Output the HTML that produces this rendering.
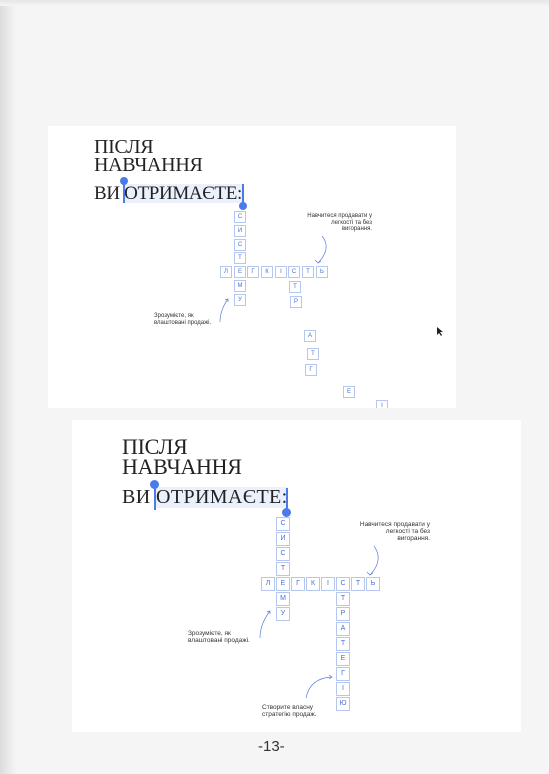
<!DOCTYPE html>
<html><head><meta charset="utf-8"><style>
*{margin:0;padding:0;box-sizing:border-box}
body{width:549px;height:774px;background:#f5f5f5;position:relative;overflow:hidden;font-family:"Liberation Sans",sans-serif}
.shl{position:absolute;left:0;top:0;width:16px;height:774px;background:linear-gradient(to right,#dcdcdc,#f5f5f5)}
.sht{position:absolute;left:0;top:0;width:549px;height:6px;background:linear-gradient(to bottom,#e6e6e6,#f5f5f5)}
.card{position:absolute;background:#fff;overflow:hidden}
.t{position:absolute;font-family:"Liberation Serif",serif;color:#222;white-space:nowrap;letter-spacing:-0.3px;line-height:1}
.hl{position:absolute;background:#eaf0fc}
.bar{position:absolute;width:2px;background:#4a7bea}
.dot{position:absolute;border-radius:50%;background:#4a7bea}
.b{position:absolute;border:1px solid #b5c6f0;color:#4a6fd6;text-align:center}
.c1 .b{width:12px;height:12px;font-size:6px;line-height:10px}
.c2 .b{width:14px;height:14px;font-size:7px;line-height:12px}
.n{position:absolute;color:#333;white-space:nowrap}
</style></head><body>
<div class="shl"></div><div class="sht"></div>

<div class="card c1" style="left:48px;top:126px;width:408px;height:282px">
<div class="t" style="left:46px;top:11px;font-size:20px">ПІСЛЯ</div>
<div class="t" style="left:46px;top:29px;font-size:20px">НАВЧАННЯ</div>
<div class="hl" style="left:76px;top:58px;width:119px;height:19px"></div>
<div class="t" style="left:46px;top:58px;font-size:19px;letter-spacing:-0.35px">ВИ <span>ОТРИМАЄТЕ:</span></div>
<div class="bar" style="left:75px;top:55px;height:22px"></div>
<div class="dot" style="left:72px;top:51px;width:8px;height:8px"></div>
<div class="bar" style="left:194px;top:58px;height:22px"></div>
<div class="dot" style="left:191px;top:76px;width:8px;height:8px"></div>
<div class="b" style="left:186px;top:85px">С</div>
<div class="b" style="left:186px;top:99px">И</div>
<div class="b" style="left:186px;top:113px">С</div>
<div class="b" style="left:186px;top:126px">Т</div>
<div class="b" style="left:172px;top:140px">Л</div>
<div class="b" style="left:186px;top:140px">Е</div>
<div class="b" style="left:199px;top:140px">Г</div>
<div class="b" style="left:213px;top:140px">К</div>
<div class="b" style="left:227px;top:140px">І</div>
<div class="b" style="left:240px;top:140px">С</div>
<div class="b" style="left:254px;top:140px">Т</div>
<div class="b" style="left:268px;top:140px">Ь</div>
<div class="b" style="left:186px;top:154px">М</div>
<div class="b" style="left:186px;top:168px">У</div>
<div class="b" style="left:241px;top:155px">Т</div>
<div class="b" style="left:242px;top:170px">Р</div>
<div class="b" style="left:256px;top:204px">А</div>
<div class="b" style="left:259px;top:222px">Т</div>
<div class="b" style="left:257px;top:238px">Г</div>
<div class="b" style="left:295px;top:260px">Е</div>
<div class="b" style="left:328px;top:274px">І</div>
<div class="n" style="left:204px;top:87px;width:120px;text-align:right;font-size:6px;line-height:6.5px">Навчитеся продавати у<br>легкості та без<br>вигорання.</div>
<div class="n" style="left:106px;top:187px;font-size:6px;line-height:6.5px">Зрозумієте, як<br>влаштовані продажі.</div>
<svg style="position:absolute;left:0;top:0" width="408" height="282"><g fill="none" stroke="#5a7fdd" stroke-width="0.7"><path d="M274 110 Q284 122 270 137"/><path d="M267 134 L270 137 L273 135"/><path d="M172 196 Q172 184 180 173"/><path d="M177 174 L180 173 L180 176"/></g>
<path d="M389 201 l0 8 l2 -2 l2 3 l1 -1 l-2 -3 l3 0 z" fill="#222"/></svg>
</div>

<div class="card c2" style="left:72px;top:420px;width:449px;height:312px">
<div class="t" style="left:50px;top:16px;font-size:22px">ПІСЛЯ</div>
<div class="t" style="left:50px;top:36px;font-size:22px">НАВЧАННЯ</div>
<div class="hl" style="left:84px;top:67px;width:131px;height:21px"></div>
<div class="t" style="left:50px;top:67px;font-size:20px;letter-spacing:0.4px">ВИ <span>ОТРИМАЄТЕ:</span></div>
<div class="bar" style="left:82px;top:66px;height:24px"></div>
<div class="dot" style="left:78px;top:60px;width:9px;height:9px"></div>
<div class="bar" style="left:214px;top:68px;height:25px"></div>
<div class="dot" style="left:210px;top:88px;width:9px;height:9px"></div>
<div class="b" style="left:204px;top:97px">С</div>
<div class="b" style="left:204px;top:112px">И</div>
<div class="b" style="left:204px;top:127px">С</div>
<div class="b" style="left:204px;top:142px">Т</div>
<div class="b" style="left:189px;top:157px">Л</div>
<div class="b" style="left:204px;top:157px">Е</div>
<div class="b" style="left:219px;top:157px">Г</div>
<div class="b" style="left:234px;top:157px">К</div>
<div class="b" style="left:249px;top:157px">І</div>
<div class="b" style="left:264px;top:157px">С</div>
<div class="b" style="left:279px;top:157px">Т</div>
<div class="b" style="left:294px;top:157px">Ь</div>
<div class="b" style="left:204px;top:172px">М</div>
<div class="b" style="left:204px;top:187px">У</div>
<div class="b" style="left:264px;top:172px">Т</div>
<div class="b" style="left:264px;top:187px">Р</div>
<div class="b" style="left:264px;top:202px">А</div>
<div class="b" style="left:264px;top:217px">Т</div>
<div class="b" style="left:264px;top:232px">Е</div>
<div class="b" style="left:264px;top:247px">Г</div>
<div class="b" style="left:264px;top:262px">І</div>
<div class="b" style="left:264px;top:277px">Ю</div>
<div class="n" style="left:227px;top:101px;width:131px;text-align:right;font-size:6.5px;line-height:7px">Навчитеся продавати у<br>легкості та без<br>вигорання.</div>
<div class="n" style="left:116px;top:210px;font-size:6.5px;line-height:7px">Зрозумієте, як<br>влаштовані продажі.</div>
<div class="n" style="left:190px;top:284px;font-size:6.5px;line-height:7px">Створите власну<br>стратегію продаж.</div>
<svg style="position:absolute;left:0;top:0" width="449" height="312"><g fill="none" stroke="#5a7fdd" stroke-width="0.7"><path d="M302 126 Q312 140 298 155"/><path d="M295 152 L298 155 L301 153"/><path d="M188 218 Q188 204 198 191"/><path d="M195 192 L198 191 L198 194"/><path d="M234 278 Q238 258 260 257"/><path d="M257 255 L260 257 L257 259"/></g></svg>
</div>

<div style="position:absolute;left:258px;top:738px;font-size:15px;color:#333;font-family:'Liberation Sans',sans-serif">-13-</div>
</body></html>
